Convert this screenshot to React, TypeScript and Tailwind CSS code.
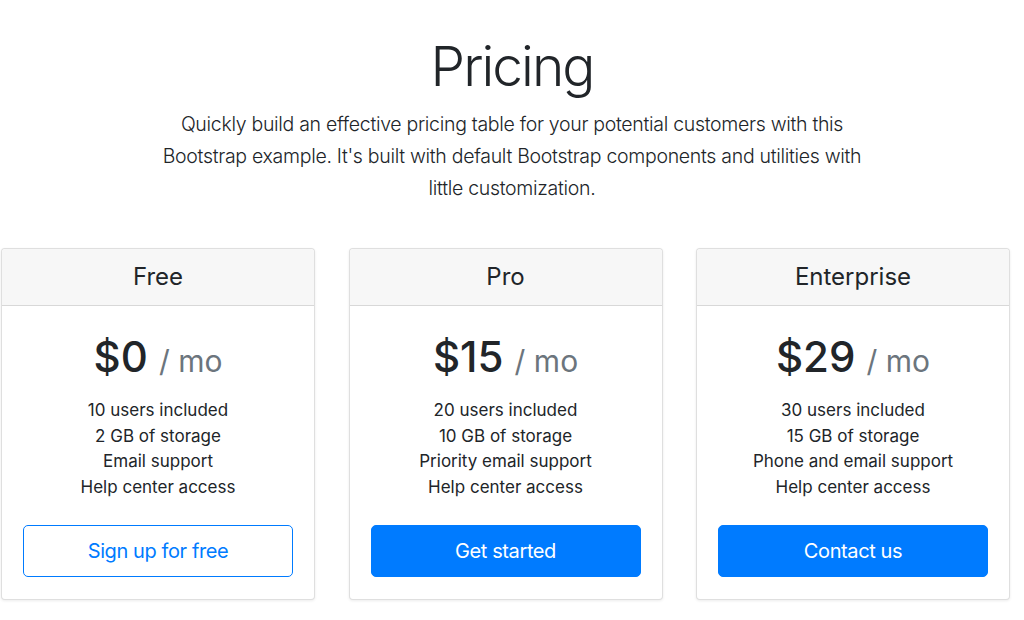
import React from "react";

type Plan = {
  name: string;
  price: string;
  features: string[];
  cta: string;
  outline?: boolean;
};

const plans: Plan[] = [
  {
    name: "Free",
    price: "$0",
    features: ["10 users included", "2 GB of storage", "Email support", "Help center access"],
    cta: "Sign up for free",
    outline: true,
  },
  {
    name: "Pro",
    price: "$15",
    features: ["20 users included", "10 GB of storage", "Priority email support", "Help center access"],
    cta: "Get started",
  },
  {
    name: "Enterprise",
    price: "$29",
    features: ["30 users included", "15 GB of storage", "Phone and email support", "Help center access"],
    cta: "Contact us",
  },
];

function Card({ plan }: { plan: Plan }) {
  return (
    <div className="w-[314px] flex flex-col rounded-[4px] border border-[rgba(0,0,0,0.125)] bg-white shadow-[0_1px_3px_rgba(0,0,0,0.08)]">
      <div className="h-[57px] flex items-center justify-center bg-[#f7f7f7] border-b border-[rgba(0,0,0,0.125)] rounded-t-[4px]">
        <h4 className="text-[24px] leading-none text-[#212529]">{plan.name}</h4>
      </div>
      <div className="px-[21px] pt-[27px] pb-[22px] flex flex-col items-center">
        <h1 className="text-[42px] leading-[48px] font-medium text-[#212529]">
          {plan.price}{" "}
          <small className="text-[30px] font-normal text-[#6c757d]">/ mo</small>
        </h1>
        <ul className="mt-[13px] text-center text-[17px] leading-[25.7px] text-[#212529]">
          {plan.features.map((f) => (
            <li key={f}>{f}</li>
          ))}
        </ul>
        <button
          className={
            plan.outline
              ? "mt-[24px] w-full h-[52px] rounded-[5px] border border-[#007bff] bg-white text-[#007bff] text-[20px] tracking-[-0.4px]"
              : "mt-[24px] w-full h-[52px] rounded-[5px] border border-[#007bff] bg-[#007bff] text-white text-[20px] tracking-[-0.4px]"
          }
        >
          {plan.cta}
        </button>
      </div>
    </div>
  );
}

export default function App() {
  return (
    <div
      className="w-[1024px] h-[620px] bg-white overflow-hidden"
      style={{ fontFamily: "Inter, 'Noto Sans', sans-serif" }}
    >
      <div className="pt-[26px] flex flex-col items-center text-center">
        <h1 className="text-[55px] leading-[80px] font-light text-[#212529] tracking-[-2px]">Pricing</h1>
        <p className="mt-[2px] w-[706px] text-[19.5px] leading-[32px] font-light text-[#212529] tracking-[-0.3px]">
          Quickly build an effective pricing table for your potential customers with this
          Bootstrap example. It's built with default Bootstrap components and utilities with
          little customization.
        </p>
      </div>
      <div className="mt-[44px] pl-[1px] flex gap-[33.5px]">
        {plans.map((p) => (
          <Card key={p.name} plan={p} />
        ))}
      </div>
    </div>
  );
}
